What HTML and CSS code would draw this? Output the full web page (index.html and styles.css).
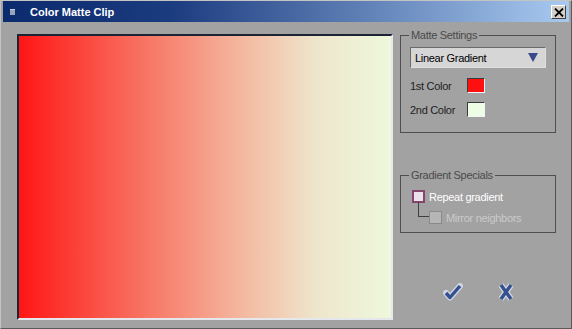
FILE: index.html
```html
<!DOCTYPE html>
<html lang="en">
<head>
    <meta charset="UTF-8">
    <title>Color Matte Clip</title>
    <link rel="stylesheet" href="styles.css">
</head>
<body>
    <div class="window">
        <div class="titlebar">
            <span class="sysicon"></span>
            <span class="title">Color Matte Clip</span>
            <button class="close-btn">
                <svg width="10" height="9" viewBox="0 0 10 9">
                    <path d="M1 0.5 L9 8.5 M9 0.5 L1 8.5" stroke="#000" stroke-width="1.8"/>
                </svg>
            </button>
        </div>

        <div class="content">
            <div class="preview"></div>

            <div class="panel">
                <fieldset class="group">
                    <legend>Matte Settings</legend>
                    <div class="dropdown">
                        <span>Linear Gradient</span>
                        <svg width="10" height="9" viewBox="0 0 10 9">
                            <path d="M0 0 L10 0 L5 9 Z" fill="#3c4a8c"/>
                        </svg>
                    </div>
                    <div class="color-row">
                        <span class="label">1st Color</span>
                        <span class="swatch red"></span>
                    </div>
                    <div class="color-row second">
                        <span class="label">2nd Color</span>
                        <span class="swatch pale"></span>
                    </div>
                </fieldset>

                <fieldset class="group specials">
                    <legend>Gradient Specials</legend>
                    <div class="check-row">
                        <span class="check on"></span>
                        <span class="check-label">Repeat gradient</span>
                    </div>
                    <div class="check-row sub">
                        <span class="tree-line"></span>
                        <span class="check off"></span>
                        <span class="check-label disabled">Mirror neighbors</span>
                    </div>
                </fieldset>

                <div class="actions">
                    <svg class="ok" width="20" height="18" viewBox="0 0 20 18">
                        <path d="M3 10 L7 14.5 L17 3" fill="none" stroke="#d0d6e4" stroke-width="6" stroke-linecap="round" stroke-linejoin="round"/>
                        <path d="M3 10 L7 14.5 L17 3" fill="none" stroke="#34508e" stroke-width="3.4" stroke-linejoin="round"/>
                    </svg>
                    <svg class="cancel" width="18" height="18" viewBox="0 0 18 18">
                        <path d="M4 2 L14 16 M14 2 L4 16" fill="none" stroke="#d0d6e4" stroke-width="6"/>
                        <path d="M4 2 L14 16 M14 2 L4 16" fill="none" stroke="#34508e" stroke-width="3.4"/>
                    </svg>
                </div>
            </div>
        </div>
    </div>
</body>
</html>
```

FILE: styles.css
```css
body {
    margin: 0;
    padding: 0;
    font-family: "Liberation Sans", Arial, sans-serif;
    font-size: 11px;
    background-color: #a2a2a2;
}
.window {
    width: 572px;
    height: 329px;
    box-sizing: border-box;
    background-color: #a2a2a2;
    border-top: 1px solid #c4c4c4;
    border-left: 1px solid #c4c4c4;
    border-right: 1px solid #5a5a5a;
    border-bottom: 1px solid #5a5a5a;
    padding: 0 2px 2px 2px;
}
.titlebar {
    height: 21px;
    display: flex;
    align-items: center;
    background: linear-gradient(to right, #0c2a6e 0%, #1c3c80 30%, #a8caf0 100%);
}
.sysicon {
    width: 5px;
    height: 5px;
    margin-left: 7px;
    background-color: #9aa4b8;
    border-top: 1px solid #c8d0e0;
}
.title {
    color: #ffffff;
    font-weight: bold;
    margin-left: 15px;
    flex: 1;
}
.close-btn {
    width: 15px;
    height: 14px;
    padding: 0;
    margin-right: 3px;
    margin-top: 1px;
    display: flex;
    align-items: center;
    justify-content: center;
    background-color: #d4d0c8;
    border-top: 1px solid #ffffff;
    border-left: 1px solid #ffffff;
    border-right: 1px solid #404040;
    border-bottom: 1px solid #404040;
}
.content {
    display: flex;
}
.preview {
    width: 376px;
    height: 286px;
    box-sizing: border-box;
    margin: 12px 0 0 14px;
    background: linear-gradient(to right, #ff1616 0%, #f86a5a 30%, #f4b8a0 60%, #eee6cc 80%, #eef8dc 100%);
    border-top: 2px solid #1c2434;
    border-left: 2px solid #1c2434;
    border-right: 2px solid #e4e8ec;
    border-bottom: 2px solid #e4e8ec;
}
.panel {
    width: 156px;
    margin-left: 7px;
    padding-top: 7px;
    letter-spacing: -0.3px;
}
.group {
    margin: 0;
    padding: 0 0 15px 0;
    border: 1px solid #4e4e4e;
    width: 156px;
    box-sizing: border-box;
}
.group legend {
    margin-left: 8px;
    padding: 0 2px;
    line-height: 13px;
    color: #4a4a4a;
}
.dropdown {
    margin: 5px 0 0 9px;
    width: 136px;
    height: 21px;
    box-sizing: border-box;
    display: flex;
    align-items: center;
    justify-content: space-between;
    padding: 0 7px 0 4px;
    background-color: #d6d6d6;
    border-top: 1px solid #6a6a6a;
    border-left: 1px solid #6a6a6a;
    border-right: 1px solid #e0e0e0;
    border-bottom: 1px solid #e0e0e0;
    color: #000;
}
.color-row {
    display: flex;
    align-items: center;
    margin: 10px 0 0 9px;
    color: #1e1e1e;
}
.color-row.second {
    margin-top: 9px;
}
.label {
    width: 57px;
}
.swatch {
    width: 18px;
    height: 15px;
    box-sizing: border-box;
    border-top: 1px solid #3a3a3a;
    border-left: 1px solid #3a3a3a;
    border-right: 1px solid #f4f4f4;
    border-bottom: 1px solid #f4f4f4;
}
.swatch.red {
    background-color: #ff1010;
}
.swatch.pale {
    background-color: #eefee6;
}
.specials {
    margin-top: 36px;
    padding-bottom: 8px;
}
.check-row {
    display: flex;
    align-items: center;
    margin: 8px 0 0 11px;
    position: relative;
}
.check-row.sub {
    margin-left: 28px;
}
.check {
    width: 13px;
    height: 13px;
    box-sizing: border-box;
    margin-right: 4px;
}
.check.on {
    background-color: #ece2ec;
    border: 2px solid #84466a;
}
.check.off {
    background-color: #b6b6b6;
    border: 1px solid #8a8a8a;
}
.check-label {
    color: #ffffff;
}
.check-label.disabled {
    color: #cacaca;
}
.tree-line {
    position: absolute;
    left: -11px;
    top: -9px;
    width: 10px;
    height: 14px;
    border-left: 1px solid #3e3e3e;
    border-bottom: 1px solid #3e3e3e;
}
.actions {
    display: flex;
    align-items: center;
    margin-top: 50px;
    padding-left: 43px;
    gap: 34px;
}
```
